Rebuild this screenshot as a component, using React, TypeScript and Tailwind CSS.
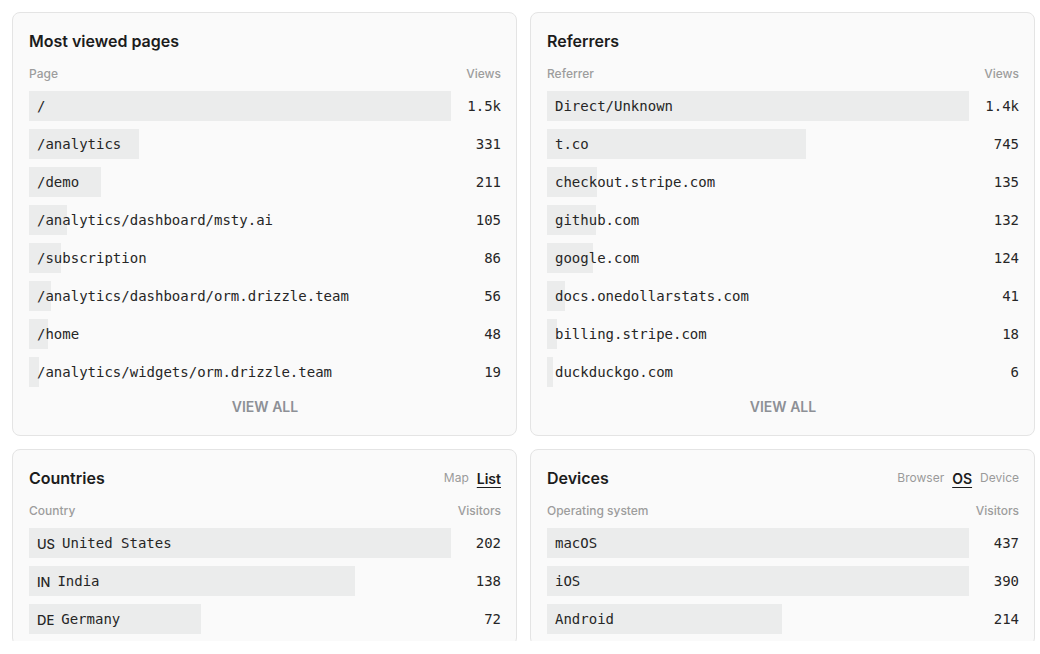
import React from "react";

type Row = { label: string; value: string; bar: number; code?: string };

const pages: Row[] = [
  { label: "/", value: "1.5k", bar: 422 },
  { label: "/analytics", value: "331", bar: 110 },
  { label: "/demo", value: "211", bar: 72 },
  { label: "/analytics/dashboard/msty.ai", value: "105", bar: 38 },
  { label: "/subscription", value: "86", bar: 32 },
  { label: "/analytics/dashboard/orm.drizzle.team", value: "56", bar: 22 },
  { label: "/home", value: "48", bar: 19 },
  { label: "/analytics/widgets/orm.drizzle.team", value: "19", bar: 10 },
];

const referrers: Row[] = [
  { label: "Direct/Unknown", value: "1.4k", bar: 422 },
  { label: "t.co", value: "745", bar: 259 },
  { label: "checkout.stripe.com", value: "135", bar: 50 },
  { label: "github.com", value: "132", bar: 49 },
  { label: "google.com", value: "124", bar: 46 },
  { label: "docs.onedollarstats.com", value: "41", bar: 18 },
  { label: "billing.stripe.com", value: "18", bar: 10 },
  { label: "duckduckgo.com", value: "6", bar: 6 },
];

const countries: Row[] = [
  { code: "US", label: "United States", value: "202", bar: 422 },
  { code: "IN", label: "India", value: "138", bar: 326 },
  { code: "DE", label: "Germany", value: "72", bar: 172 },
];

const devices: Row[] = [
  { label: "macOS", value: "437", bar: 422 },
  { label: "iOS", value: "390", bar: 422 },
  { label: "Android", value: "214", bar: 235 },
];

const BarRow = ({ row }: { row: Row }) => (
  <div className="flex items-center h-[30px]">
    <div className="relative flex-1 h-full">
      <div
        className="absolute left-0 top-0 h-full bg-[#ebecec]"
        style={{ width: row.bar }}
      />
      <div className="relative flex items-center h-full pl-[8px] text-[14px] text-[#262626] whitespace-nowrap font-['DejaVu_Sans_Mono',monospace]">
        {row.code && (
          <span className="mr-[7px] mt-[3px] text-[13px] font-['Inter',sans-serif] font-medium">
            {row.code}
          </span>
        )}
        {row.label}
      </div>
    </div>
    <div className="w-[51px] text-right text-[14px] text-[#262626] font-['DejaVu_Sans_Mono',monospace]">
      {row.value}
    </div>
  </div>
);

const Card = ({
  title,
  left,
  right,
  rows,
  tabs,
  viewAll,
}: {
  title: string;
  left: string;
  right: string;
  rows: Row[];
  tabs?: { label: string; active?: boolean }[];
  viewAll?: boolean;
}) => (
  <div className="rounded-lg border border-[#e4e4e4] bg-[#fafafa] pl-4 pr-[15px] pt-4 pb-[11px]">
    <div className="flex items-center justify-between h-6">
      <h3 className="text-[16px] leading-6 font-semibold text-[#1c1c1c]">{title}</h3>
      {tabs && (
        <div className="flex items-center gap-[8px]">
          {tabs.map((t) =>
            t.active ? (
              <span
                key={t.label}
                className="text-[14px] font-semibold text-[#1c1c1c] underline underline-offset-[3px]"
              >
                {t.label}
              </span>
            ) : (
              <span key={t.label} className="text-[12px] text-[#9a9a9a]">
                {t.label}
              </span>
            )
          )}
        </div>
      )}
    </div>
    <div className="mt-[13px] flex justify-between text-[12px] leading-4 font-medium text-[#9d9d9d]">
      <span>{left}</span>
      <span>{right}</span>
    </div>
    <div className="mt-[9px] flex flex-col gap-2">
      {rows.map((r) => (
        <BarRow key={r.label} row={r} />
      ))}
    </div>
    {viewAll && (
      <div className="mt-[1px] flex h-9 items-center justify-center text-[14px] font-semibold text-[#8d9096] uppercase">
        View all
      </div>
    )}
  </div>
);

export default function App() {
  return (
    <div className="h-[641px] overflow-hidden bg-white pt-3 pl-3 pr-[5px] font-['Inter',sans-serif]">
      <div className="grid grid-cols-[505px_505px] gap-[13px]">
        <Card title="Most viewed pages" left="Page" right="Views" rows={pages} viewAll />
        <Card title="Referrers" left="Referrer" right="Views" rows={referrers} viewAll />
        <Card
          title="Countries"
          left="Country"
          right="Visitors"
          rows={countries}
          tabs={[{ label: "Map" }, { label: "List", active: true }]}
        />
        <Card
          title="Devices"
          left="Operating system"
          right="Visitors"
          rows={devices}
          tabs={[{ label: "Browser" }, { label: "OS", active: true }, { label: "Device" }]}
        />
      </div>
    </div>
  );
}
